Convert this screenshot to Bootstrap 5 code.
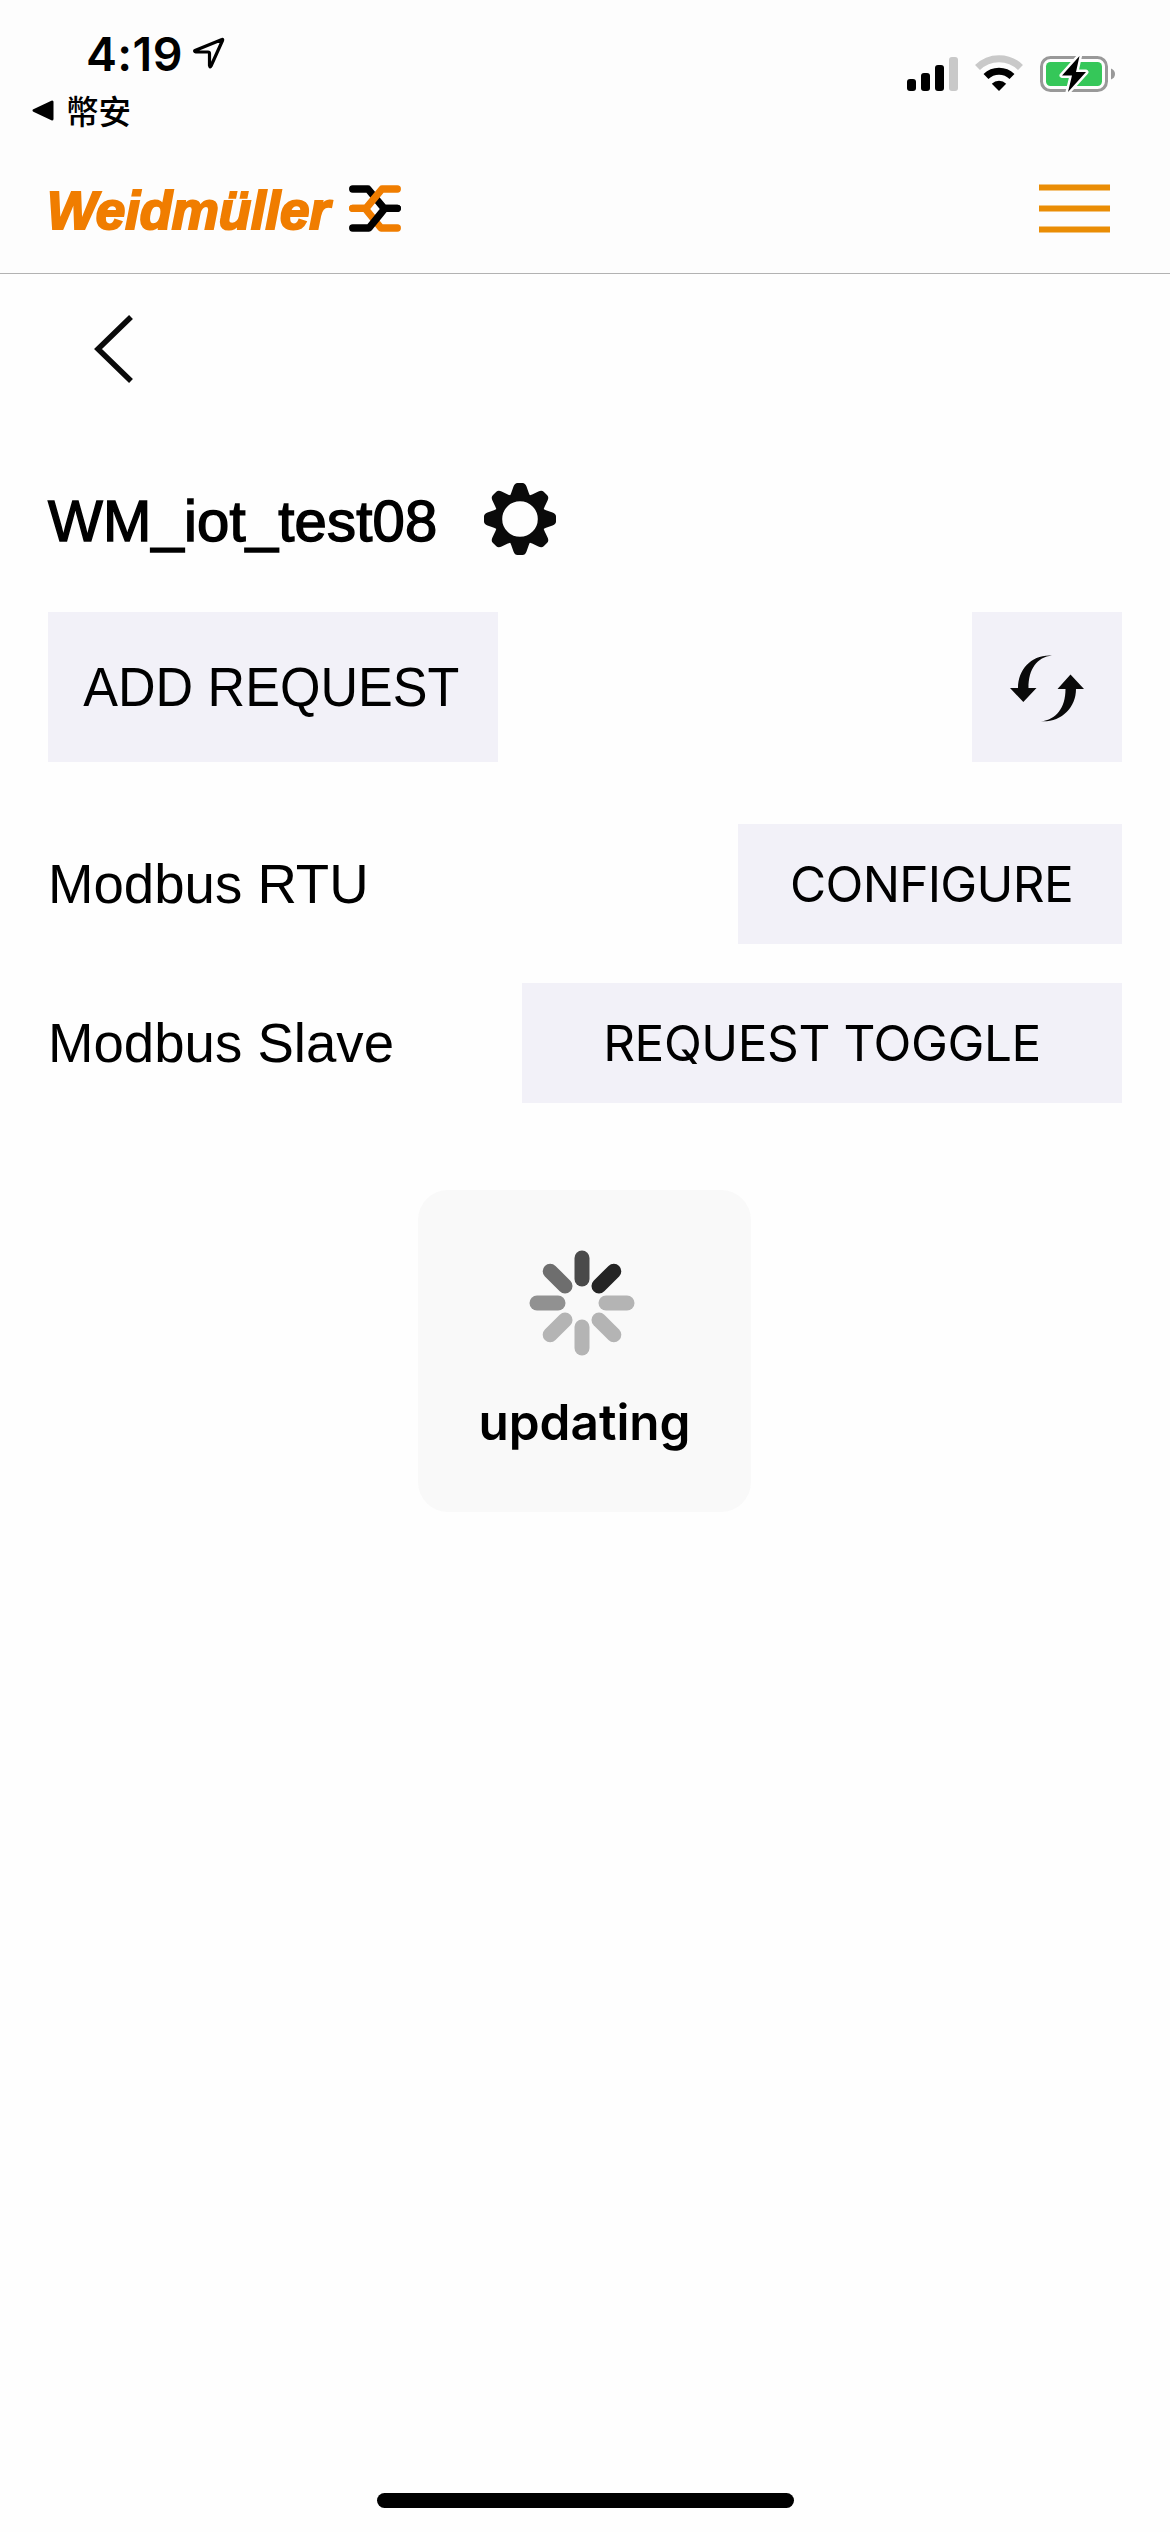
<!DOCTYPE html>
<html lang="en">
<head>
<meta charset="utf-8">
<meta name="viewport" content="width=device-width, initial-scale=1">
<title>WM_iot_test08</title>
<link href="https://cdn.jsdelivr.net/npm/bootstrap@5.3.0/dist/css/bootstrap.min.css" rel="stylesheet">
<style>
body{background:#fefefe;color:#000;font-family:"Liberation Sans",Arial,sans-serif;height:2532px;overflow:hidden}
svg{display:block;flex:none}
.app-bar{height:274px;background:#fdfdfd;border-bottom:1px solid #b2b2b2}
.status-row{height:152px}
.status-time{font:600 46.5px/54px Inter,sans-serif;letter-spacing:.4px;padding:27px 0 0 86px;gap:10px}
.status-time svg{margin-top:10px}
.status-return{font:500 32.5px/44px "Noto Sans CJK TC",sans-serif;padding-left:32px;margin-top:7px;gap:12px}
.status-icons{padding:55px 55px 0 0}
.brand-row{height:113px;padding:0 60px 0 47px}
.brand-name{font:italic bold 53px/60px "Liberation Sans",Arial,sans-serif;color:#f07d00;-webkit-text-stroke:2.2px #f07d00;letter-spacing:-.2px;padding-top:4px}
.brand-mark{margin-left:19px}
.content{padding:0 48px}
.back-btn{margin:41px 0 0 46px;width:40px;height:68px}
.title-row{margin-top:100px;gap:46.5px}
.device-title{font-size:58px;line-height:66px;padding-top:4px;-webkit-text-stroke:1.5px #000;letter-spacing:.2px}
.tile{background:#f2f1f8;border:0;border-radius:0;color:#000;display:flex;align-items:center;justify-content:center;padding:0}
.tile-add{width:450px;height:150px;font-size:56px;padding-right:3px}
.tile-add span{transform:scaleX(.93)}
.tile-sync{width:150px;height:150px;padding-top:3px}
.tile-sm{height:120px;font:400 49.5px/60px Inter,sans-serif}
.tile-configure{width:384px;letter-spacing:-.7px;padding-left:3px}
.tile-toggle{width:600px;letter-spacing:-.42px}
.action-row{margin-top:57px}
.rtu-row{margin-top:62px}
.slave-row{margin-top:39px}
.row-label{font-size:56px;line-height:64px;transform:scaleX(.975);transform-origin:left}
.hud{width:333px;height:322px;border-radius:30px;background:#f9f9f9;margin:87px 0 0 370px;padding-top:60px}
.hud-spinner{margin:0 6px 36px 0}
.hud-text{font:600 49.5px/60px Inter,sans-serif}
.home-bar{width:417px;height:15px;border-radius:8px;background:#000;left:377px;bottom:24px}
</style>
</head>
<body class="position-relative">
<header class="app-bar">
  <div class="status-row d-flex justify-content-between">
    <div>
      <div class="status-time d-flex"><span>4:19</span>
        <svg width="32" height="32" viewBox="0 0 32 32"><path d="M2 13.500 29 2.500Q30 2 29.500 3.500L18 29Q17 31 16.500 28.500V16.500Q16.500 15 15 15L3 15Q1 14.500 2 13.500Z" fill="none" stroke="#000" stroke-width="3.200" stroke-linejoin="round"/></svg>
      </div>
      <div class="status-return d-flex align-items-center">
        <svg width="22" height="21" viewBox="0 0 22 21"><path d="M2 10.500 20 2V19Z" stroke="#000" stroke-width="3" stroke-linejoin="round"/></svg><span>幣安</span>
      </div>
    </div>
    <div class="status-icons">
      <svg width="208" height="38" viewBox="0 0 208 38">
        <rect x="0" y="24" width="9" height="12" rx="3"/><rect x="14" y="18" width="9" height="18" rx="3"/><rect x="28" y="10" width="9" height="26" rx="3"/><rect x="42" y="2" width="9" height="34" rx="3" fill="#c9c9c9"/>
        <path d="M70.500 12.500A30.500 30.500 0 0 1 113.500 12.500" fill="none" stroke="#c9c9c9" stroke-width="7"/>
        <path d="M79 21.500A18.500 18.500 0 0 1 105 21.500" fill="none" stroke="#000" stroke-width="7"/>
        <path d="M92 36 84.800 28.800A10.200 10.200 0 0 1 99.200 28.800Z"/>
        <rect x="134.500" y="2.500" width="65" height="33" rx="9" fill="none" stroke="#999" stroke-width="3"/>
        <rect x="139" y="7" width="56" height="24" rx="4.500" fill="#35c759"/>
        <path d="M204 13.500Q208 15 208 19T204 24.500Z" fill="#999"/>
        <path d="M172.500 1 155 20.500H165L161 37 179 17H169Z" fill="#000" stroke="#fdfdfd" stroke-width="5" stroke-linejoin="round" paint-order="stroke"/>
      </svg>
    </div>
  </div>
  <div class="brand-row d-flex justify-content-between align-items-center">
    <div class="d-flex align-items-center">
      <span class="brand-name">Weidmüller</span>
      <svg class="brand-mark" width="52" height="48" viewBox="0 0 52 48" fill="none" stroke-width="7.300" stroke-linecap="round" stroke-linejoin="round">
        <path d="M3.700 4H19L35 23.300H48.300" stroke="#000"/><path d="M3.700 23.300H16L32 43H48.300" stroke="#f07d00"/>
        <path d="M48.300 4H33L17 23.300H3.700" stroke="#f07d00"/><path d="M3.700 43H20L36 23.300H48.300" stroke="#000"/>
      </svg>
    </div>
    <svg width="71" height="49" viewBox="0 0 71 49" fill="#ea8d05"><path d="M0 .500H71V6.500H0ZM0 21.500H71V27.500H0ZM0 42.500H71V48.500H0Z"/></svg>
  </div>
</header>
<main class="content">
  <button class="btn back-btn border-0 p-0 d-block" aria-label="Back"><svg width="40" height="68" viewBox="0 0 40 68"><path d="M37 2 4 34 37 66" fill="none" stroke="#0a0a0a" stroke-width="5.500"/></svg></button>
  <div class="title-row d-flex align-items-center">
    <h1 class="device-title fw-normal m-0">WM_iot_test08</h1>
    <svg width="72" height="72" viewBox="-36 -36 72 72" fill="#0a0a0a">
      <defs><path id="tooth" d="M-11 -21.500Q-9.500 -24 -8.800 -26L-6.500 -32.500Q-5.200 -36 -2.500 -36H2.500Q5.200 -36 6.500 -32.500L8.800 -26Q9.500 -24 11 -21.500Z"/></defs>
      <circle r="21.500" fill="none" stroke="#0a0a0a" stroke-width="7.400"/>
      <use href="#tooth"/><use href="#tooth" transform="rotate(45)"/><use href="#tooth" transform="rotate(90)"/><use href="#tooth" transform="rotate(135)"/><use href="#tooth" transform="rotate(180)"/><use href="#tooth" transform="rotate(225)"/><use href="#tooth" transform="rotate(270)"/><use href="#tooth" transform="rotate(315)"/>
    </svg>
  </div>
  <div class="action-row d-flex justify-content-between">
    <button class="btn tile tile-add"><span>ADD REQUEST</span></button>
    <button class="btn tile tile-sync" aria-label="Refresh"><svg width="74" height="67" viewBox="0 0 74 67" fill="#0a0a0a"><path d="M42 .500C22 -1 8 14 8 33H0L13.300 47 26.500 33H18.500C18.500 14 27 2 42 .500Z"/><path d="M31 66.300C51 67.500 66 53 66 34H74L60.500 19.500 47.500 34H55.500C55.500 53 46 65 31 66.300Z"/></svg></button>
  </div>
  <div class="rtu-row d-flex justify-content-between align-items-center"><span class="row-label">Modbus RTU</span><button class="btn tile tile-sm tile-configure">CONFIGURE</button></div>
  <div class="slave-row d-flex justify-content-between align-items-center"><span class="row-label">Modbus Slave</span><button class="btn tile tile-sm tile-toggle">REQUEST TOGGLE</button></div>
  <div class="hud d-flex flex-column align-items-center" role="status">
    <svg class="hud-spinner" width="106" height="106" viewBox="-53 -53 106 106" stroke="#b4b4b4" stroke-width="15" stroke-linecap="round">
      <path d="M0 -45V-24" stroke="#4a4a4a"/><path d="M0 -45V-24" stroke="#242424" transform="rotate(45)"/><path d="M0 -45V-24" transform="rotate(90)"/><path d="M0 -45V-24" transform="rotate(135)"/><path d="M0 -45V-24" transform="rotate(180)"/><path d="M0 -45V-24" transform="rotate(225)"/><path d="M0 -45V-24" stroke="#919191" transform="rotate(270)"/><path d="M0 -45V-24" stroke="#6e6e6e" transform="rotate(315)"/>
    </svg>
    <div class="hud-text">updating</div>
  </div>
</main>
<div class="home-bar position-absolute"></div>
<script src="https://cdn.jsdelivr.net/npm/bootstrap@5.3.0/dist/js/bootstrap.bundle.min.js"></script>
</body>
</html>
